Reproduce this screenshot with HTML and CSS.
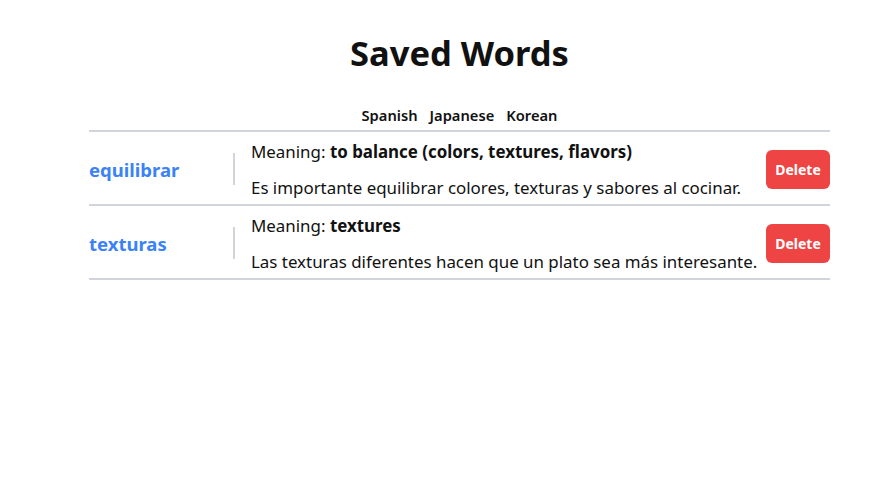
FILE: index.html
```html
<!DOCTYPE html>
<html lang="en">
<head>
<meta charset="utf-8">
<title>Saved Words</title>
<link rel="stylesheet" href="styles.css">
</head>
<body>
<main class="page">
  <h1 class="title">Saved Words</h1>
  <nav class="tabs">
    <span class="tab">Spanish</span>
    <span class="tab">Japanese</span>
    <span class="tab">Korean</span>
  </nav>
  <ul class="list">
    <li class="row">
      <div class="word">equilibrar</div>
      <div class="divider"></div>
      <div class="details">
        <p class="meaning">Meaning: <strong>to balance (colors, textures, flavors)</strong></p>
        <p class="example">Es importante equilibrar colores, texturas y sabores al cocinar.</p>
      </div>
      <button class="delete">Delete</button>
    </li>
    <li class="row">
      <div class="word">texturas</div>
      <div class="divider"></div>
      <div class="details">
        <p class="meaning">Meaning: <strong>textures</strong></p>
        <p class="example">Las texturas diferentes hacen que un plato sea más interesante.</p>
      </div>
      <button class="delete">Delete</button>
    </li>
  </ul>
</main>
</body>
</html>
```
FILE: styles.css
```css
* { box-sizing: border-box; }
body {
  margin: 0;
  background: #ffffff;
  color: #111111;
  font-family: "Noto Sans", "Open Sans", sans-serif;
}
.page {
  width: 741px;
  margin-left: 89px;
  padding-top: 30px;
}
.title {
  margin: 0;
  text-align: center;
  font-size: 34.5px;
  line-height: 46px;
  font-weight: 700;
}
.tabs {
  display: flex;
  justify-content: center;
  gap: 12px;
  margin-top: 29px;
  height: 25px;
  font-size: 14.7px;
  font-weight: 600;
  line-height: 20px;
}
.list {
  list-style: none;
  margin: 0;
  padding: 0;
  border-top: 2px solid #d1d5db;
}
.row {
  display: flex;
  align-items: center;
  padding: 6px 0 4px;
  border-bottom: 2px solid #d1d5db;
}
.word {
  width: 144px;
  color: #3b82f6;
  font-size: 18.5px;
  font-weight: 700;
}
.divider {
  width: 2px;
  height: 32px;
  background: #d1d5db;
  margin-right: 16px;
}
.details {
  flex: 1;
  padding-top: 2px;
}
.meaning, .example {
  margin: 0;
  font-size: 16.9px;
  line-height: 24px;
}
.meaning strong { font-weight: 700; }
.example { margin-top: 12px; }
.delete {
  width: 64px;
  height: 39px;
  border: none;
  border-radius: 6px;
  background: #ef4444;
  color: #ffffff;
  font-family: inherit;
  font-size: 14px;
  font-weight: 700;
  padding: 0;
}
```
